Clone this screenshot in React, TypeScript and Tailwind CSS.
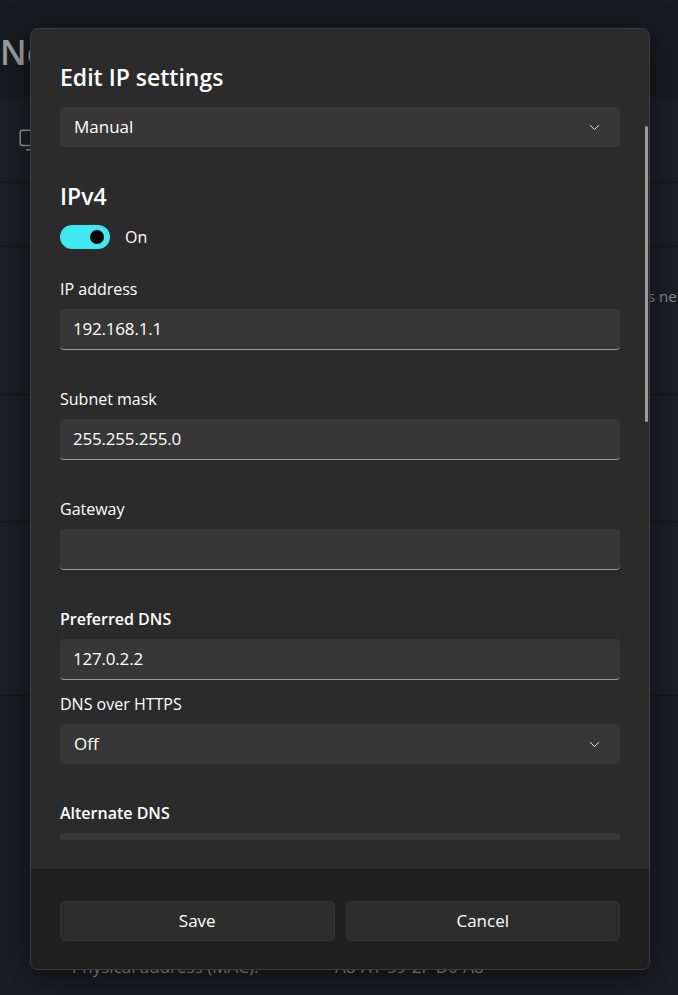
import { ChevronDown, Monitor } from 'lucide-react';

const font = { fontFamily: '"Open Sans", "Noto Sans", sans-serif' };

const Label = ({ text, bold }: { text: string; bold?: boolean }) => (
  <p
    className={`h-6 text-[16px] leading-6 text-white ${bold ? 'font-semibold' : 'font-normal'}`}
  >
    {text}
  </p>
);

const TextBox = ({ value }: { value: string }) => (
  <div className="flex h-[41px] items-center rounded-[4px] border-b border-[#9a9a9a] bg-[#373737] px-[13px] text-[17px] tracking-[-0.2px] text-white">
    {value}
  </div>
);

const Dropdown = ({ value }: { value: string }) => (
  <div className="flex h-10 items-center justify-between rounded-[4px] bg-[#373737] pl-[14px] pr-[17px] text-[17px] text-white">
    <span>{value}</span>
    <ChevronDown size={17} strokeWidth={1.4} className="text-[#e6e6e6]" />
  </div>
);

const BgRow = ({ h, children }: { h: string; children?: React.ReactNode }) => (
  <div className={`${h} relative border-b border-[#14161a] bg-[#1c1f25]`}>{children}</div>
);

export default function App() {
  return (
    <div className="relative h-[995px] w-[678px] overflow-hidden bg-[#1a1d22]" style={font}>
      {/* page behind the dialog */}
      <div className="flex flex-col">
        <div className="h-[97px] bg-[#171a1f] pt-[28px]">
          <p className="text-[34px] font-semibold leading-[48px] text-[#9d9d9d]">Ne</p>
        </div>
        <BgRow h="h-[86px]">
          <Monitor size={26} strokeWidth={1.4} className="absolute left-[18px] top-[30px] text-[#9a9a9a]" />
        </BgRow>
        <BgRow h="h-[64px]" />
        <BgRow h="h-[148px]">
          <p className="absolute left-[648px] top-[38px] whitespace-nowrap text-[15px] text-[#8d8d8d]">s ne</p>
        </BgRow>
        <BgRow h="h-[127px]" />
        <BgRow h="h-[174px]" />
        <div className="h-[299px] bg-[#1b1e24] pt-[258px] pl-[72px] text-[17px] text-[#9a9a9a]">
          <div className="flex whitespace-nowrap">
            <span className="w-[263px]">Physical address (MAC):</span>
            <span>A8-A1-59-2F-D0-A8</span>
          </div>
        </div>
      </div>

      {/* dialog */}
      <div className="absolute left-[30px] top-[28px] flex h-[942px] w-[620px] flex-col overflow-hidden rounded-lg border border-[#3b3b3b] bg-[#2b2b2b] shadow-[0_8px_32px_rgba(0,0,0,0.5)]">
        <div className="relative h-[811px] shrink-0 overflow-hidden px-[29px] pt-[32px]">
          <h2 className="h-8 text-[23px] font-semibold leading-8 text-white">Edit IP settings</h2>
          <div className="mt-[14px]">
            <Dropdown value="Manual" />
          </div>
          <h3 className="mt-[33px] h-8 text-[23px] font-semibold leading-8 text-white">IPv4</h3>
          <div className="mt-[13px] flex h-6 items-center gap-[15px]">
            <div className="flex h-6 w-[50px] items-center justify-end rounded-full bg-[#3fe9f2] pr-[6px]">
              <div className="h-[14px] w-[14px] rounded-full bg-black" />
            </div>
            <span className="text-[16px] text-white">On</span>
          </div>

          <div className="mt-[28px] flex flex-col gap-2">
            <Label text="IP address" />
            <TextBox value="192.168.1.1" />
          </div>
          <div className="mt-[37px] flex flex-col gap-2">
            <Label text="Subnet mask" />
            <TextBox value="255.255.255.0" />
          </div>
          <div className="mt-[37px] flex flex-col gap-2">
            <Label text="Gateway" />
            <TextBox value="" />
          </div>
          <div className="mt-[37px] flex flex-col gap-2">
            <Label text="Preferred DNS" bold />
            <TextBox value="127.0.2.2" />
          </div>
          <div className="mt-3 flex flex-col gap-2">
            <Label text="DNS over HTTPS" />
            <Dropdown value="Off" />
          </div>
          <div className="mt-[37px] flex flex-col gap-2">
            <Label text="Alternate DNS" bold />
            <TextBox value="" />
          </div>

          <div className="absolute left-[614px] top-[97px] h-[296px] w-[3px] rounded-full bg-[#9b9b9b]" />
        </div>
        <div className="h-[29px] shrink-0" />
        <div className="flex flex-1 gap-[11px] border-t border-[#1c1c1c] bg-[#202020] px-[29px] pt-[31px]">
          <button className="h-10 flex-1 rounded-[5px] border border-[#353535] bg-[#2d2d2d] text-[17px] text-white">
            Save
          </button>
          <button className="h-10 flex-1 rounded-[5px] border border-[#353535] bg-[#2d2d2d] text-[17px] text-white">
            Cancel
          </button>
        </div>
      </div>
    </div>
  );
}
